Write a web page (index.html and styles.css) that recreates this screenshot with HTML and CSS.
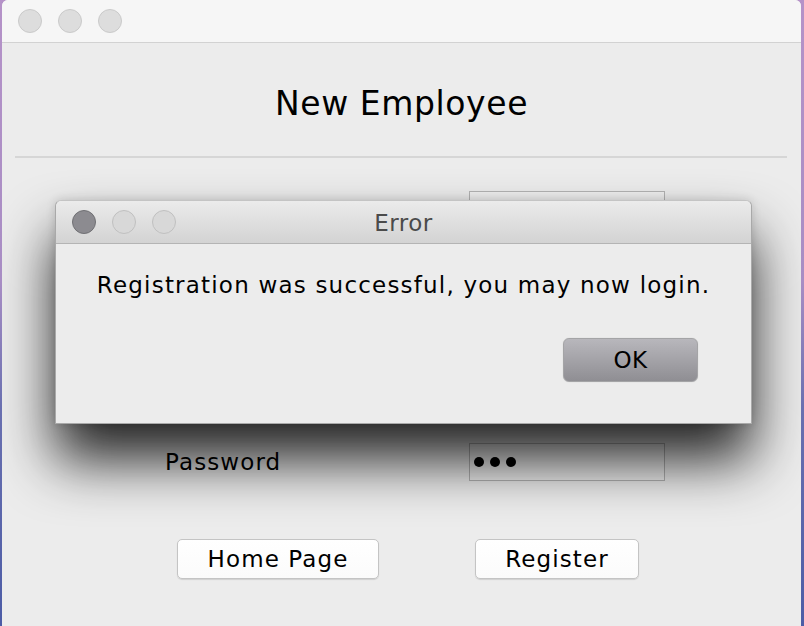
FILE: index.html
```html
<!DOCTYPE html>
<html>
<head>
<meta charset="utf-8">
<title>New Employee</title>
<link rel="stylesheet" href="styles.css">
</head>
<body>
<div class="window">
  <div class="titlebar">
    <span class="light"></span><span class="light"></span><span class="light"></span>
  </div>
  <div class="content">
    <h1 class="heading">New Employee</h1>
    <div class="separator"></div>
    <div class="form">
      <div class="row"><span class="label"></span><span class="field"></span></div>
      <div class="row"><span class="label"></span><span class="field"></span></div>
      <div class="row"><span class="label"></span><span class="field"></span></div>
      <div class="row"><span class="label">Password</span><span class="field"><span class="dot"></span><span class="dot"></span><span class="dot"></span></span></div>
    </div>
    <div class="actions">
      <button class="btn btn-home">Home Page</button>
      <button class="btn btn-register">Register</button>
    </div>
  </div>

  <div class="dialog">
    <div class="dialog-titlebar">
      <span class="dlight dlight-close"></span><span class="dlight"></span><span class="dlight"></span>
      <span class="dialog-title">Error</span>
    </div>
    <div class="dialog-body">
      <p class="message">Registration was successful, you may now login.</p>
      <div class="dialog-actions"><button class="ok">OK</button></div>
    </div>
  </div>
</div>
</body>
</html>
```

FILE: styles.css
```css
html, body {
  margin: 0;
  padding: 0;
  height: 100%;
  overflow: hidden;
}
body {
  background: linear-gradient(180deg, #b592c8 0%, #a88dc4 45%, #6a70b0 65%, #4c5ca6 100%);
  font-family: "DejaVu Sans", "Liberation Sans", sans-serif;
  color: #000;
}
.window {
  position: relative;
  margin-left: 2px;
  width: 799px;
  height: 660px;
  background: #ececec;
  border-radius: 6px 6px 0 0;
  overflow: hidden;
}
.titlebar {
  height: 42px;
  background: #f6f6f6;
  border-bottom: 1px solid #d2d2d2;
  display: flex;
  align-items: center;
  gap: 16px;
  padding-left: 16px;
}
.light {
  width: 22px;
  height: 22px;
  border-radius: 50%;
  background: #dddddd;
  border: 1px solid #cacaca;
}
.content {
  display: flex;
  flex-direction: column;
}
.heading {
  margin: 41px 0 0;
  font-size: 33px;
  line-height: 40px;
  font-weight: normal;
  text-align: center;
  letter-spacing: 0.6px;
}
.separator {
  margin: 32px 14px 0 13px;
  height: 2px;
  background: #d6d6d6;
}
.form {
  margin-top: 33px;
  display: flex;
  flex-direction: column;
  gap: 46px;
}
.row {
  display: flex;
  align-items: center;
  padding-left: 163px;
}
.label {
  width: 304px;
  font-size: 23px;
  letter-spacing: 1.1px;
}
.field {
  box-sizing: border-box;
  width: 196px;
  height: 38px;
  background: #f0f0f0;
  border: 1px solid #b4b4b4;
  display: flex;
  align-items: center;
  gap: 6px;
  padding-left: 4px;
}
.dot {
  width: 10px;
  height: 10px;
  border-radius: 50%;
  background: #000;
}
.actions {
  margin-top: 58px;
  display: flex;
  padding-left: 175px;
  gap: 96px;
}
.btn {
  box-sizing: border-box;
  height: 40px;
  background: linear-gradient(#ffffff, #fbfbfb);
  border: 1px solid #c4c4c4;
  border-radius: 5px;
  box-shadow: 0 1px 1px rgba(0,0,0,0.12);
  font-family: "DejaVu Sans", "Liberation Sans", sans-serif;
  font-size: 23px;
  letter-spacing: 1.1px;
  color: #000;
  padding: 0;
}
.btn-home { width: 202px; }
.btn-register { width: 164px; }

/* Dialog overlay */
.dialog {
  position: absolute;
  left: 53px;
  top: 200px;
  width: 697px;
  height: 224px;
  box-sizing: border-box;
  background: #ececec;
  border: 1px solid #a9a9a9;
  border-top-color: #c4c4c4;
  border-radius: 6px 6px 0 0;
  box-shadow: 0 36px 56px rgba(0,0,0,0.85), 0 0 10px rgba(0,0,0,0.15);
  display: flex;
  flex-direction: column;
}
.dialog-titlebar {
  position: relative;
  height: 42px;
  background: linear-gradient(#ebebeb, #d3d3d3);
  border-bottom: 1px solid #b4b4b4;
  border-radius: 6px 6px 0 0;
  display: flex;
  align-items: center;
  gap: 16px;
  padding-left: 16px;
}
.dlight {
  width: 22px;
  height: 22px;
  border-radius: 50%;
  background: #d8d8d8;
  border: 1px solid #c0c0c0;
}
.dlight-close {
  background: #8c8b90;
  border-color: #707074;
}
.dialog-title {
  position: absolute;
  left: 0;
  right: 0;
  top: 9px;
  text-align: center;
  font-size: 23px;
  line-height: 26px;
  letter-spacing: 0.5px;
  color: #4b4b4b;
}
.dialog-body {
  display: flex;
  flex-direction: column;
}
.message {
  margin: 27px 0 0;
  font-size: 23px;
  line-height: 28px;
  letter-spacing: 1.2px;
  text-align: center;
}
.dialog-actions {
  margin-top: 39px;
  display: flex;
  justify-content: flex-end;
  padding-right: 53px;
}
.ok {
  box-sizing: border-box;
  width: 135px;
  height: 44px;
  border-radius: 6px;
  border: 1px solid #a4a4a6;
  background: linear-gradient(#b8b7bc, #8f8e93);
  box-shadow: 0 0 1px rgba(0,0,0,0.2);
  font-family: "DejaVu Sans", "Liberation Sans", sans-serif;
  font-size: 23px;
  letter-spacing: 0.5px;
  color: #000;
  padding: 0;
}
```
